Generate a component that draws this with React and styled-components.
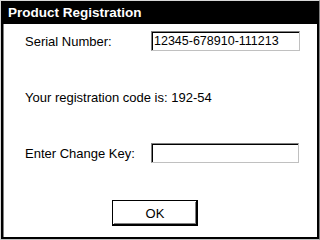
import { createGlobalStyle, styled } from "styled-components";

const GlobalStyle = createGlobalStyle`
  html, body {
    margin: 0;
    padding: 0;
    background: #fff;
  }
  * {
    box-sizing: border-box;
  }
`;

const Frame = styled.div`
  width: 320px;
  height: 240px;
  display: flex;
  flex-direction: column;
  background: #000;
  border-top: 1px solid #d8d8d8;
  border-left: 1px solid #d8d8d8;
  border-right: 1px solid #808080;
  border-bottom: 1px solid #c0c0c0;
  padding: 0 2px 2px 2px;
  font-family: "Liberation Sans", Arial, sans-serif;
`;

const TitleBar = styled.div`
  height: 23px;
  display: flex;
  align-items: center;
  padding-left: 5px;
  color: #fff;
  font-weight: bold;
  font-size: 13.5px;
`;

const Body = styled.div`
  flex: 1;
  background: #fff;
  border-left: 1px solid #808080;
  display: flex;
  flex-direction: column;
  padding: 6px 0 0 21px;
`;

const Row = styled.div`
  height: ${(p) => p.$h}px;
  display: flex;
  align-items: center;
`;

const Label = styled.span`
  width: ${(p) => p.$w || 126}px;
  font-size: 13px;
  color: #000;
`;

const Field = styled.div`
  width: ${(p) => p.$w}px;
  height: 20px;
  display: flex;
  align-items: center;
  padding-left: 2px;
  border-top: 1px solid #808080;
  border-left: 1px solid #808080;
  border-right: 1px solid #c0c0c0;
  border-bottom: 1px solid #c0c0c0;
  box-shadow: inset 1px 1px 0 #000;
  font-size: 12.5px;
  color: #000;
`;

const ButtonRow = styled.div`
  flex: 1;
  display: flex;
  justify-content: center;
  align-items: flex-start;
  padding-top: 36px;
  padding-right: 32px;
`;

const Button = styled.button`
  width: 86px;
  height: 26px;
  background: #fff;
  border: 1px solid #000;
  box-shadow: inset -1px -1px 0 #000, inset 1px 1px 0 #fff,
    inset -2px -2px 0 #808080;
  font-family: "Liberation Sans", Arial, sans-serif;
  font-size: 13px;
  color: #000;
  padding: 0;
`;

export default function App() {
  return (
    <>
      <GlobalStyle />
      <Frame>
        <TitleBar>Product Registration</TitleBar>
        <Body>
          <Row $h={22}>
            <Label>Serial Number:</Label>
            <Field $w={149}>12345-678910-111213</Field>
          </Row>
          <Row $h={90}>
            <Label $w={260}>Your registration code is: 192-54</Label>
          </Row>
          <Row $h={22}>
            <Label>Enter Change Key:</Label>
            <Field $w={148} />
          </Row>
          <ButtonRow>
            <Button>OK</Button>
          </ButtonRow>
        </Body>
      </Frame>
    </>
  );
}
